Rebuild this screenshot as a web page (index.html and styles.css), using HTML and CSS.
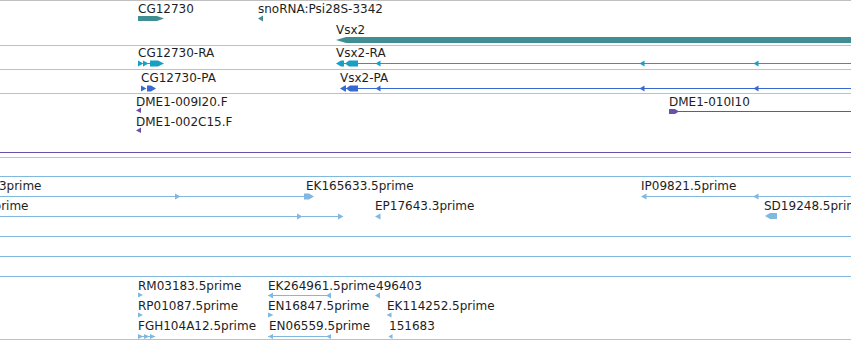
FILE: index.html
```html
<!DOCTYPE html>
<html>
<head>
<meta charset="utf-8">
<title>Genome browser tracks</title>
<link rel="stylesheet" href="styles.css">
</head>
<body>
<div class="view">
  <div class="track t-gene">
    <svg width="851" height="44" viewBox="0 1 851 44">
      <text x="138" y="13">CG12730</text>
      <polygon class="teal" points="138,16 157,16 164,18.5 157,21 138,21"/>
      <text x="258" y="13">snoRNA:Psi28S-3342</text>
      <polygon class="teal" points="258,18.5 263,15.5 263,21.5"/>
      <text x="336" y="34">Vsx2</text>
      <polygon class="teal" points="336,40 346,37 851,37 851,43 346,43"/>
    </svg>
  </div>
  <div class="track t-rna">
    <svg width="851" height="23" viewBox="0 46 851 23">
      <g class="cyan">
        <text x="138" y="57">CG12730-RA</text>
        <polygon points="138,60.5 143.5,63.5 138,66.5"/>
        <polygon points="143,60.5 148.5,63.5 143,66.5"/>
        <rect x="148" y="63" width="3" height="1"/>
        <polygon points="150,60.5 158,60.5 164,63.5 158,66.5 150,66.5"/>
        <text x="336" y="57">Vsx2-RA</text>
        <polygon points="336,63.5 341,60.5 344,60.5 344,66.5 341,66.5"/>
        <polygon points="345,63.5 349,60.5 358,60.5 358,66.5 349,66.5"/>
        <rect x="344" y="63" width="507" height="1"/>
        <polygon points="375.5,63.5 380.5,60.5 380.5,66.5"/>
        <polygon points="639.5,63.5 644.5,60.5 644.5,66.5"/>
        <polygon points="753.5,63.5 758.5,60.5 758.5,66.5"/>
      </g>
    </svg>
  </div>
  <div class="track t-pep">
    <svg width="851" height="23" viewBox="0 70 851 23">
      <g class="blue">
        <text x="141" y="82">CG12730-PA</text>
        <polygon points="141,85.5 146.5,88.5 141,91.5"/>
        <polygon points="147,85.5 151,85.5 156,88.5 151,91.5 147,91.5"/>
        <text x="340" y="82">Vsx2-PA</text>
        <polygon points="340,88.5 345,85.5 346,85.5 346,91.5 345,91.5"/>
        <polygon points="346,88.5 350,85.5 358,85.5 358,91.5 350,91.5"/>
        <rect x="345" y="88" width="506" height="1"/>
        <polygon points="375.5,88.5 380.5,85.5 380.5,91.5"/>
        <polygon points="639.5,88.5 644.5,85.5 644.5,91.5"/>
        <polygon points="753.5,88.5 758.5,85.5 758.5,91.5"/>
      </g>
    </svg>
  </div>
  <div class="track t-bac">
    <svg width="851" height="63" viewBox="0 94 851 63">
      <g class="purple">
        <text x="136" y="106">DME1-009I20.F</text>
        <polygon points="136,110.5 141,107.5 141,113"/>
        <text x="136" y="126">DME1-002C15.F</text>
        <polygon points="136,130.5 141,127.5 141,133"/>
        <text x="669" y="106">DME1-010I10</text>
        <polygon points="669,109 675,109 679,111.5 675,114 669,114"/>
        <rect x="675" y="111" width="176" height="1"/>
        <rect x="0" y="152" width="851" height="1"/>
      </g>
    </svg>
  </div>
  <div class="track t-est">
    <svg width="851" height="181" viewBox="0 158 851 181">
      <g class="est">
        <rect x="0" y="176" width="851" height="1"/>

        <text class="end" x="41.5" y="190">3prime</text>
        <rect x="0" y="196" width="306" height="1"/>
        <polygon points="175,193.5 180.5,196.5 175,199.5"/>
        <polygon points="304,193.5 309,193.5 314,196.5 309,199.5 304,199.5"/>
        <text x="306" y="190">EK165633.5prime</text>
        <text x="641" y="190">IP09821.5prime</text>
        <polygon points="641,196.5 646.5,193.5 646.5,199.5"/>
        <rect x="644" y="196" width="207" height="1"/>
        <polygon points="753,196.5 758.5,193.5 758.5,199.5"/>

        <text class="end" x="28.5" y="210">prime</text>
        <rect x="0" y="216" width="341" height="1"/>
        <polygon points="297,213.5 302.5,216.5 297,219.5"/>
        <polygon points="338,213.5 343.5,216.5 338,219.5"/>
        <text x="375" y="210">EP17643.3prime</text>
        <polygon points="375,216.5 380.5,213.5 380.5,219.5"/>
        <text x="764" y="210">SD19248.5prime</text>
        <polygon points="765,216 770,213 777,213 777,219 770,219"/>

        <rect x="0" y="236" width="851" height="1"/>
        <rect x="0" y="256" width="851" height="1"/>
        <rect x="0" y="276" width="851" height="1"/>

        <text x="138" y="290">RM03183.5prime</text>
        <polygon points="138,292.5 143,295 138,297.5"/>
        <text x="268" y="290">EK264961.5prime</text>
        <rect x="268" y="295" width="62" height="1"/>
        <polygon points="268,295.5 273,292.5 273,298.5"/>
        <polygon points="326,295.5 331,292.5 331,298.5"/>
        <text x="376" y="290">496403</text>
        <polygon points="375,295.5 380,292.5 380,298.5"/>

        <text x="138" y="310">RP01087.5prime</text>
        <polygon points="138,312.5 143,315 138,317.5"/>
        <text x="268" y="310">EN16847.5prime</text>
        <polygon points="268,312.5 273.5,315 268,317.5"/>
        <text x="387" y="310">EK114252.5prime</text>
        <polygon points="386.5,315 391.5,312.5 391.5,317.5"/>

        <text x="138" y="330">FGH104A12.5prime</text>
        <rect x="138" y="336" width="17" height="1"/>
        <polygon points="138,334 143.5,336.5 138,339"/>
        <polygon points="144,334 149.5,336.5 144,339"/>
        <polygon points="150,334 155.5,336.5 150,339"/>
        <text x="269" y="330">EN06559.5prime</text>
        <rect x="268" y="336" width="62" height="1"/>
        <polygon points="268,336.5 273,334 273,339"/>
        <polygon points="326,336.5 331,334 331,339"/>
        <text x="389" y="330">151683</text>
        <polygon points="388.5,336.5 392.5,334 392.5,339"/>
      </g>
    </svg>
  </div>
</div>
</body>
</html>
```
FILE: styles.css
```css
html, body {
  margin: 0;
  padding: 0;
  background: #ffffff;
}

.view {
  width: 851px;
  height: 341px;
  overflow: hidden;
  display: flex;
  flex-direction: column;
  background: #ffffff;
}

.track {
  flex: none;
  border-top: 1px solid #c0c0c0;
  overflow: hidden;
}

.track svg {
  display: block;
}

.t-gene { height: 44px; }
.t-rna { height: 23px; }
.t-pep { height: 23px; }
.t-bac { height: 63px; }
.t-est {
  height: 181px;
  border-bottom: 1px solid #c0c0c0;
}

text {
  font-family: "DejaVu Sans", "Liberation Sans", sans-serif;
  font-size: 12px;
  fill: #1e1e1e;
}

text.end {
  text-anchor: end;
}

.teal { fill: #3f8e93; }
.cyan polygon, .cyan rect { fill: #17a0c3; }
.blue polygon, .blue rect { fill: #3669d2; }
.purple polygon, .purple rect { fill: #6a50a7; }
.est polygon, .est rect { fill: #80b8e0; }
```
